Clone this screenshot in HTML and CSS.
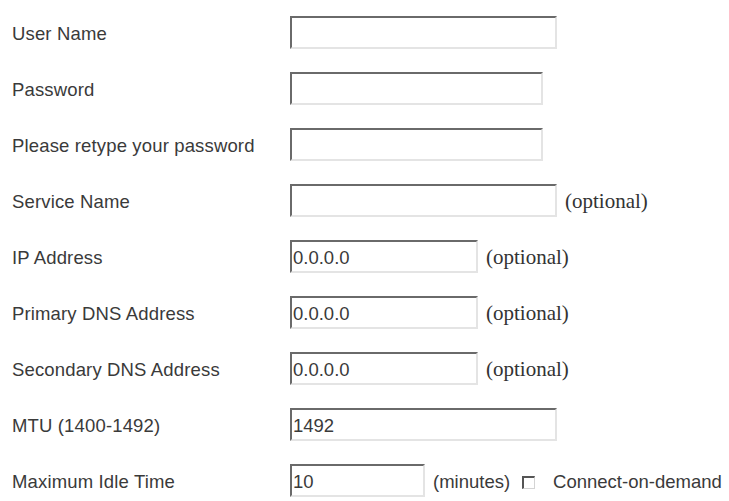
FILE: index.html
```html
<!DOCTYPE html>
<html>
<head>
<meta charset="utf-8">
<link rel="stylesheet" href="styles.css">
</head>
<body>
<form class="form">
  <div class="row">
    <label class="label">User Name</label>
    <div class="field"><input class="box w-wide" type="text"></div>
  </div>
  <div class="row">
    <label class="label">Password</label>
    <div class="field"><input class="box w-mid" type="password"></div>
  </div>
  <div class="row">
    <label class="label">Please retype your password</label>
    <div class="field"><input class="box w-mid" type="password"></div>
  </div>
  <div class="row">
    <label class="label">Service Name</label>
    <div class="field"><input class="box w-wide" type="text"><span class="note">(optional)</span></div>
  </div>
  <div class="row">
    <label class="label">IP Address</label>
    <div class="field"><input class="box w-ip" type="text" value="0.0.0.0"><span class="note">(optional)</span></div>
  </div>
  <div class="row">
    <label class="label">Primary DNS Address</label>
    <div class="field"><input class="box w-ip" type="text" value="0.0.0.0"><span class="note">(optional)</span></div>
  </div>
  <div class="row">
    <label class="label">Secondary DNS Address</label>
    <div class="field"><input class="box w-ip" type="text" value="0.0.0.0"><span class="note">(optional)</span></div>
  </div>
  <div class="row">
    <label class="label">MTU (1400-1492)</label>
    <div class="field"><input class="box w-wide" type="text" value="1492"></div>
  </div>
  <div class="row">
    <label class="label">Maximum Idle Time</label>
    <div class="field">
      <input class="box w-short" type="text" value="10">
      <span class="unit">(minutes)</span>
      <input class="chk" type="checkbox">
      <span class="chk-label">Connect-on-demand</span>
    </div>
  </div>
</form>
</body>
</html>
```
FILE: styles.css
```css
html, body {
  margin: 0;
  padding: 0;
  background: #ffffff;
}

.form {
  display: flex;
  flex-direction: column;
  padding: 16px 0 0 12px;
  font-family: "Liberation Sans", Arial, sans-serif;
  font-size: 18.5px;
  color: #3a3a3a;
}

.row {
  display: grid;
  grid-template-columns: 278px 1fr;
  align-items: baseline;
  height: 56px;
}

.label {
  white-space: nowrap;
  letter-spacing: 0.15px;
}

.field {
  display: flex;
  align-items: baseline;
  white-space: nowrap;
}

.box {
  box-sizing: border-box;
  height: 33px;
  margin: 0;
  padding: 3px 0 0 1px;
  font-family: "Liberation Sans", Arial, sans-serif;
  font-size: 18.5px;
  color: #3a3a3a;
  background: #ffffff;
  border-style: solid;
  border-width: 2px 2px 2px 2px;
  border-color: #6a6a6a #e4e4e4 #e4e4e4 #6a6a6a;
  outline: none;
}

.w-wide { width: 267px; }
.w-mid { width: 253px; }
.w-ip { width: 188px; }
.w-short { width: 135px; }

.note {
  margin-left: 8px;
  font-family: "Liberation Serif", "Times New Roman", serif;
  font-size: 21px;
  color: #333333;
}

.unit {
  margin-left: 8px;
}

.chk {
  appearance: none;
  -webkit-appearance: none;
  box-sizing: border-box;
  width: 13px;
  height: 13px;
  margin: 0 0 0 12px;
  border-style: solid;
  border-width: 2px 1px 1px 2px;
  border-color: #555555 #d4d4d4 #d4d4d4 #555555;
  background: #ffffff;
  align-self: center;
  position: relative;
  top: 2px;
}

.chk-label {
  margin-left: 18px;
}
```
